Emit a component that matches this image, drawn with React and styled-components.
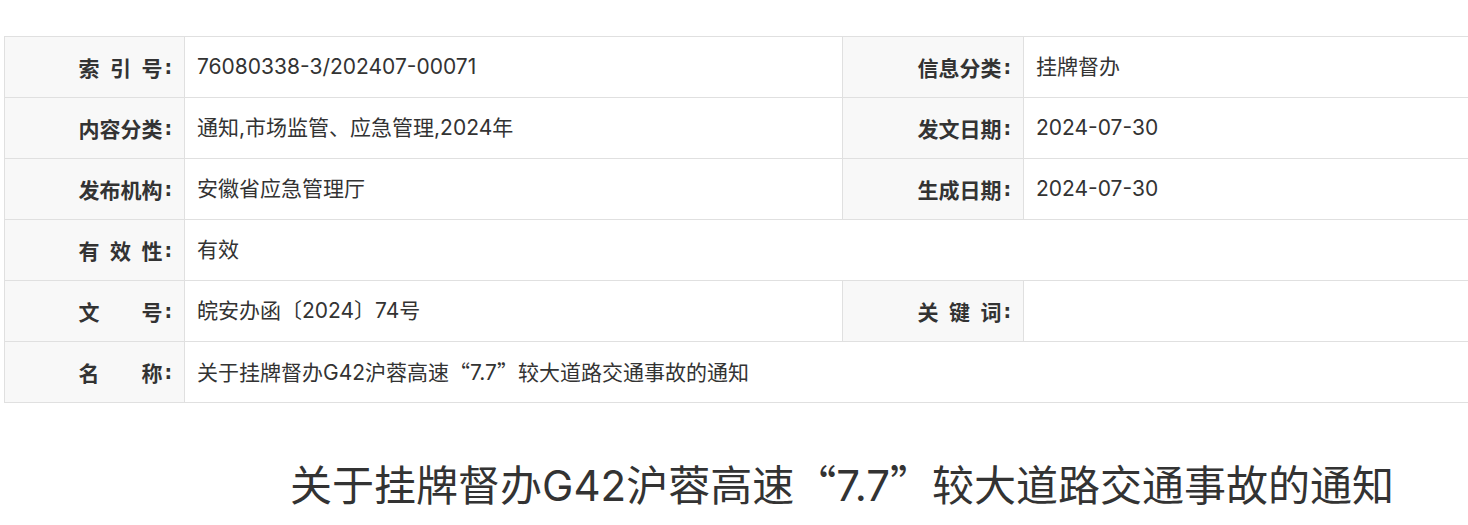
import React from "react";
import styled, { createGlobalStyle } from "styled-components";

const GlobalStyle = createGlobalStyle`
  html, body {
    margin: 0;
    padding: 0;
    background: #ffffff;
    overflow: hidden;
  }
  body {
    font-family: Inter, "Noto Sans CJK SC", sans-serif;
    color: #333333;
  }
`;

const Page = styled.div`
  width: 1676px;
  padding: 36px 0 0 4px;
`;

const InfoTable = styled.table`
  width: 1676px;
  table-layout: fixed;
  border-collapse: collapse;
`;

const Col = styled.col`
  width: ${(p) => p.$w}px;
`;

const Row = styled.tr`
  height: 61px;
`;

const LabelCell = styled.td`
  background: #f8f8f8;
  border: 1px solid #e0e0e0;
  padding: 0 12px 0 0;
  vertical-align: middle;
  text-align: right;
`;

const LabelInner = styled.div`
  display: inline-flex;
  align-items: center;
  font-size: 21px;
  font-weight: 700;
  color: #333333;
  line-height: 28px;
  font-family: "Noto Sans CJK SC", sans-serif;
`;

const LabelChars = styled.span`
  display: inline-flex;
  justify-content: space-between;
  width: 84px;
`;

const Colon = styled.span`
  margin-left: 2px;
  font-family: "DejaVu Sans", sans-serif;
  font-size: 19px;
`;

const ValueCell = styled.td`
  background: #ffffff;
  border: 1px solid #e0e0e0;
  padding: 0 0 0 12px;
  vertical-align: middle;
  font-size: 21px;
  line-height: 28px;
  color: #333333;
  white-space: nowrap;
`;

const Quote = styled.span`
  display: inline-block;
  width: 1em;
  text-align: ${(p) => (p.$open ? "right" : "left")};
  font-family: "Noto Sans CJK SC", sans-serif;
`;

const Title = styled.h1`
  margin: 50px 0 0;
  font-size: 42px;
  font-weight: 400;
  line-height: 60px;
  text-align: center;
  color: #333333;
  white-space: nowrap;
`;

const Name = () => (
  <>
    关于挂牌督办G42沪蓉高速<Quote $open>“</Quote>7.7<Quote>”</Quote>较大道路交通事故的通知
  </>
);

const Label = ({ text }) => (
  <LabelCell>
    <LabelInner>
      <LabelChars>
        {text.split("").map((c, i) => (
          <span key={i}>{c}</span>
        ))}
      </LabelChars>
      <Colon>:</Colon>
    </LabelInner>
  </LabelCell>
);

const rows = [
  [
    { label: "索引号", value: "76080338-3/202407-00071" },
    { label: "信息分类", value: "挂牌督办" },
  ],
  [
    { label: "内容分类", value: "通知,市场监管、应急管理,2024年" },
    { label: "发文日期", value: "2024-07-30" },
  ],
  [
    { label: "发布机构", value: "安徽省应急管理厅" },
    { label: "生成日期", value: "2024-07-30" },
  ],
  [{ label: "有效性", value: "有效" }],
  [
    { label: "文号", value: "皖安办函〔2024〕74号" },
    { label: "关键词", value: "" },
  ],
  [{ label: "名称", value: <Name /> }],
];

export default function App() {
  return (
    <Page>
      <GlobalStyle />
      <InfoTable>
        <colgroup>
          <Col $w={180} />
          <Col $w={658} />
          <Col $w={181} />
          <Col $w={657} />
        </colgroup>
        <tbody>
          {rows.map((cells, r) => (
            <Row key={r}>
              {cells.map((cell, i) => (
                <React.Fragment key={i}>
                  <Label text={cell.label} />
                  <ValueCell colSpan={cells.length === 1 ? 3 : 1}>
                    {cell.value}
                  </ValueCell>
                </React.Fragment>
              ))}
            </Row>
          ))}
        </tbody>
      </InfoTable>
      <Title>
        <Name />
      </Title>
    </Page>
  );
}
